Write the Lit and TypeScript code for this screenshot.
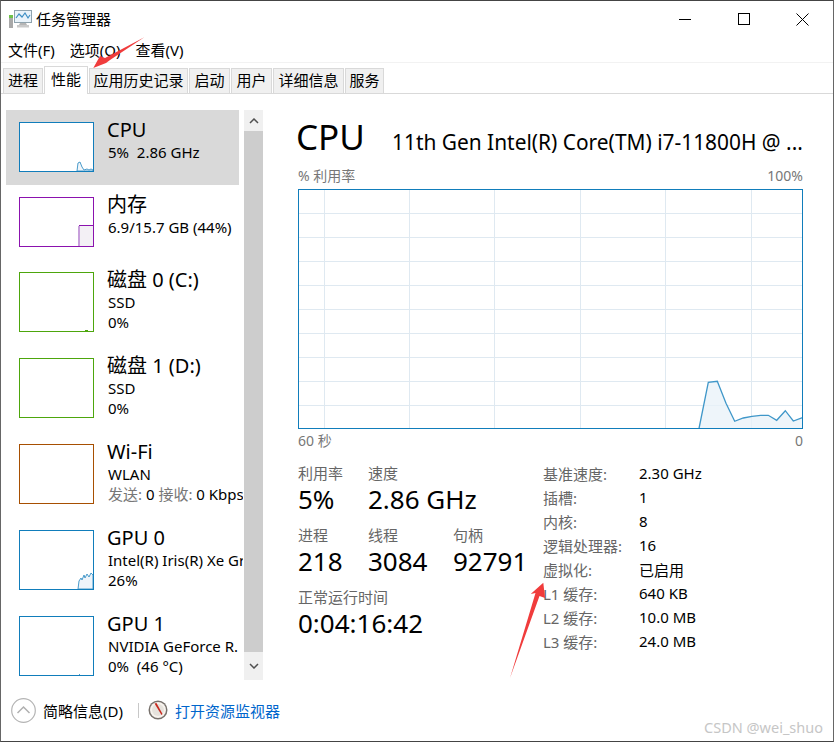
import { LitElement, html, css, svg } from "lit";
import { customElement } from "lit/decorators.js";

type Item = {
  name: string;
  lines: string[];
  color: string;
  tall: boolean;
  selected?: boolean;
  mark?: ReturnType<typeof svg>;
};

const BLUE = "#117dbb";

const items: Item[] = [
  {
    name: "CPU",
    lines: ["5%  2.86 GHz"],
    color: BLUE,
    tall: false,
    selected: true,
    mark: svg`<path d="M58 49 L59 41 L61 40 L63 45 L65 48 L68 47 L70 48 L72 47 L74 48 V49 Z" fill="#f1f6fa" stroke="#4a9bcb" stroke-width="1"/>`,
  },
  {
    name: "内存",
    lines: ["6.9/15.7 GB (44%)"],
    color: "#8b12ae",
    tall: false,
    mark: svg`<rect x="60" y="28" width="14" height="21" fill="#f3f0f5"/>
      <rect x="59" y="29" width="2" height="20" fill="#c79fdb"/>
      <rect x="60" y="28" width="14" height="1" fill="#8b12ae"/>`,
  },
  {
    name: "磁盘 0 (C:)",
    lines: ["SSD", "0%"],
    color: "#4da60c",
    tall: true,
    mark: svg`<rect x="66" y="58" width="3" height="1" fill="#4da60c"/>`,
  },
  { name: "磁盘 1 (D:)", lines: ["SSD", "0%"], color: "#4da60c", tall: true },
  { name: "Wi-Fi", lines: ["WLAN", "发送: 0 接收: 0 Kbps"], color: "#a74f01", tall: true },
  {
    name: "GPU 0",
    lines: ["Intel(R) Iris(R) Xe Graphics", "26%"],
    color: BLUE,
    tall: true,
    mark: svg`<path d="M59 59 L60 51 L62 48 L63 50 L65 45 L66 48 L68 44 L70 47 L72 43 L74 45 V59 Z" fill="#eef4fa" stroke="#4a9bcb" stroke-width="1"/>`,
  },
  {
    name: "GPU 1",
    lines: ["NVIDIA GeForce R.", "0%  (46 °C)"],
    color: BLUE,
    tall: true,
    mark: svg`<rect x="60" y="58" width="1" height="1" fill="#4a9bcb"/>`,
  },
];

const details = [
  ["基准速度:", "2.30 GHz"],
  ["插槽:", "1"],
  ["内核:", "8"],
  ["逻辑处理器:", "16"],
  ["虚拟化:", "已启用"],
  ["L1 缓存:", "640 KB"],
  ["L2 缓存:", "10.0 MB"],
  ["L3 缓存:", "24.0 MB"],
];

const tabs: [string, number][] = [
  ["进程", 40],
  ["性能", 44],
  ["应用历史记录", 99],
  ["启动", 41],
  ["用户", 41],
  ["详细信息", 71],
  ["服务", 39],
];

// graph points, relative to the top left of the plot
const curve =
  "401,239.500 410.300,193.300 419.300,192.300 428,214.300 436.700,232.300 445.300,229 454,227.300 462.700,226.300 470.300,226.300 478.700,231.300 487.300,221.700 495.300,232 504.500,228.700";

@customElement("app-root")
export class AppRoot extends LitElement {
  static styles = css`
    :host {
      display: flex;
      flex-direction: column;
      position: relative;
      box-sizing: border-box;
      width: 834px;
      height: 742px;
      border: 1px solid #444;
      border-left-color: #666;
      border-right-color: #666;
      background: #fff;
      overflow: hidden;
      color: #000;
      font-family: "Noto Sans", "Noto Sans CJK SC", sans-serif;
      font-size: 15px;
    }
    .titlebar {
      display: flex;
      align-items: center;
      height: 38px;
      flex: none;
    }
    .appicon {
      margin-left: 8px;
      width: 24px;
      height: 20px;
      margin-top: -3px;
    }
    .title {
      margin-left: 3px;
      margin-top: -3px;
      font-size: 15px;
      flex: 1;
    }
    .winbtn {
      width: 58.500px;
      height: 38px;
      padding-bottom: 2px;
      box-sizing: border-box;
      display: flex;
      align-items: center;
      justify-content: center;
    }
    .winbtn:last-child {
      margin-right: 1px;
    }
    .menu {
      display: flex;
      gap: 15px;
      height: 23px;
      align-items: center;
      padding-left: 7px;
      flex: none;
      line-height: 1;
    }
    .tabs {
      display: flex;
      align-items: flex-end;
      height: 32px;
      padding-left: 2px;
      gap: 1px;
      border-top: 1px solid #f2f2f2;
      border-bottom: 1px solid #d9d9d9;
      box-sizing: border-box;
      flex: none;
    }
    .tab {
      box-sizing: border-box;
      height: 25px;
      padding-bottom: 2px;
      display: flex;
      align-items: center;
      justify-content: center;
      background: #f0f0f0;
      border: 1px solid #d9d9d9;
      border-bottom: none;
      line-height: 1;
      white-space: nowrap;
    }
    .tab.active {
      height: 28px;
      background: #fff;
      margin-bottom: -1px;
      padding-bottom: 3px;
    }
    .body {
      display: flex;
      flex: 1;
      min-height: 0;
    }
    .side {
      display: flex;
      width: 262px;
      padding: 16px 0 0 5px;
      box-sizing: border-box;
      flex: none;
    }
    .list {
      width: 237px;
      height: 570px;
      overflow: hidden;
      flex: none;
    }
    .item {
      box-sizing: border-box;
      width: 233px;
      height: 75px;
      padding: 12px 0 0 13px;
      display: flex;
      gap: 14px;
      white-space: nowrap;
    }
    .item.tall {
      height: 86px;
    }
    .item.selected {
      background: #d9d9d9;
    }
    .thumb {
      width: 75px;
      height: 50px;
      flex: none;
      display: block;
    }
    .tall .thumb {
      height: 60px;
    }
    .text {
      margin-top: -3px;
    }
    .name {
      font-size: 20px;
      line-height: 22px;
      height: 23px;
      margin-left: -1px;
    }
    .line {
      font-size: 15px;
      line-height: 20px;
      white-space: pre;
    }
    .muted {
      color: #777;
    }
    .scroll {
      margin-left: 1px;
      width: 19px;
      height: 570px;
      display: flex;
      flex-direction: column;
      background: #f0f0f0;
      flex: none;
    }
    .scroll .btn {
      height: 21px;
      display: flex;
      align-items: center;
      justify-content: center;
      flex: none;
    }
    .scroll .btn.down {
      height: 28px;
    }
    .scroll .bar {
      flex: 1;
      background: #cdcdcd;
    }
    .main {
      flex: 1;
      padding: 18px 30px 0 35px;
      min-width: 0;
    }
    .head {
      display: flex;
      align-items: baseline;
      height: 51px;
      white-space: nowrap;
    }
    .head .big {
      font-size: 35px;
      line-height: 49px;
      width: 96px;
      margin-left: -2px;
    }
    .head .cpu {
      font-size: 20.900px;
    }
    .axis {
      display: flex;
      justify-content: space-between;
      color: #777;
      font-size: 14px;
      line-height: 18px;
    }
    .axis.top {
      margin-top: 4px;
      height: 22px;
    }
    .axis.bottom {
      height: 30px;
      margin-top: 3px;
    }
    .plot {
      display: block;
      width: 505px;
      height: 240px;
    }
    .stats {
      display: flex;
    }
    .left {
      width: 245px;
      flex: none;
      margin-top: 1px;
    }
    .row {
      display: flex;
      height: 62px;
    }
    .stat .k {
      font-size: 15px;
      line-height: 20px;
      color: #666;
    }
    .stat .v {
      font-size: 26px;
      line-height: 32px;
    }
    .s1 {
      width: 70px;
    }
    .s2 {
      width: 85px;
    }
    .right {
      display: grid;
      grid-template-columns: 96px auto;
      grid-auto-rows: 24px;
      align-items: center;
      align-self: flex-start;
      margin-top: -1px;
      font-size: 15px;
    }
    .right .k {
      color: #666;
    }
    .footer {
      height: 60px;
      flex: none;
      display: flex;
      align-items: center;
      padding: 0 0 2px 10px;
      box-sizing: border-box;
      font-size: 15px;
    }
    .footer .less {
      margin-left: 7px;
    }
    .footer .sep {
      width: 1px;
      height: 15px;
      background: #c8c8c8;
      margin: 0 9px 0 15px;
    }
    .footer .gauge {
      margin-right: 7px;
    }
    .footer .link {
      color: #0066cc;
    }
    .arrow {
      position: absolute;
      left: -1px;
      top: -1px;
      pointer-events: none;
    }
    .mark {
      position: absolute;
      right: 10px;
      bottom: 5px;
      color: #c6c6c6;
      font-size: 14.500px;
      line-height: 18px;
      pointer-events: none;
    }
  `;

  renderItem(it: Item) {
    const h = it.tall ? 60 : 50;
    return html`
      <div class="item ${it.selected ? "selected" : ""} ${it.tall ? "tall" : ""}">
        <svg class="thumb" viewBox="0 0 75 ${h}">
          <rect width="75" height=${h} fill="#fff" />
          ${it.mark}
          <rect x=".5" y=".5" width="74" height=${h - 1} fill="none" stroke=${it.color} />
        </svg>
        <div class="text">
          <div class="name">${it.name}</div>
          ${it.lines.map((l) => {
            if (l.startsWith("发送")) {
              return html`<div class="line"><span class="muted">发送:</span> 0 <span class="muted">接收:</span> 0 Kbps</div>`;
            }
            return html`<div class="line">${l}</div>`;
          })}
        </div>
      </div>
    `;
  }

  renderPlot() {
    const vs = [26, 111, 196, 282, 367, 453];
    const hs = [24, 48, 72, 96, 120, 144, 168, 192, 216];
    return html`
      <svg class="plot" viewBox="0 0 505 240">
        ${vs.map((x) => svg`<line x1=${x + 0.5} x2=${x + 0.5} y1="0" y2="240" stroke="#dfe9f1"/>`)}
        ${hs.map((y) => svg`<line x1="0" x2="505" y1=${y + 0.5} y2=${y + 0.5} stroke="#dfe9f1"/>`)}
        <polygon points="${curve} 504.500,239.500" fill="#e8f1f8" fill-opacity=".75" />
        <polyline points=${curve} fill="none" stroke="#3f97c9" stroke-width="1.300" />
        <rect x=".5" y=".5" width="504" height="239" fill="none" stroke=${BLUE} />
      </svg>
    `;
  }

  render() {
    return html`
      <div class="titlebar">
        <svg class="appicon" viewBox="0 0 24 20">
          <rect x="5.500" y="1.500" width="17" height="12" fill="#eaf3fa" stroke="#8fa3ae" />
          <path d="M7 9 L10 5 L13 8 L16 4 L19 9 L21 6" fill="none" stroke="#3f8fc4" stroke-width="1.200" />
          <rect x="0" y="6" width="4" height="13" fill="#a9a9a9" />
          <rect x="0" y="6" width="4" height="3" fill="#6fc24a" />
          <path d="M11 14 H17 L18 16 H10 Z" fill="#b5b5b5" />
          <rect x="8" y="16" width="12" height="2.500" fill="#c9c9c9" />
        </svg>
        <div class="title">任务管理器</div>
        <div class="winbtn">
          <svg width="13" height="13"><line x1="0" x2="12" y1="6.500" y2="6.500" stroke="#000" /></svg>
        </div>
        <div class="winbtn">
          <svg width="13" height="13"><rect x=".5" y=".5" width="11" height="11" fill="none" stroke="#000" /></svg>
        </div>
        <div class="winbtn">
          <svg width="13" height="13"><path d="M.5 .5 L12.500 12.500 M12.500 .5 L.5 12.500" stroke="#000" /></svg>
        </div>
      </div>
      <div class="menu"><span>文件(F)</span><span>选项(O)</span><span>查看(V)</span></div>
      <div class="tabs">
        ${tabs.map(
          ([t, w]) => html`<div class="tab ${t === "性能" ? "active" : ""}" style="width:${w}px">${t}</div>`
        )}
      </div>
      <div class="body">
        <div class="side">
          <div class="list">${items.map((it) => this.renderItem(it))}</div>
          <div class="scroll">
            <div class="btn">
              <svg width="10" height="6"><path d="M1 5 L5 1 L9 5" fill="none" stroke="#505050" stroke-width="1.500" /></svg>
            </div>
            <div class="bar"></div>
            <div class="btn down">
              <svg width="10" height="6"><path d="M1 1 L5 5 L9 1" fill="none" stroke="#505050" stroke-width="1.500" /></svg>
            </div>
          </div>
        </div>
        <div class="main">
          <div class="head">
            <div class="big">CPU</div>
            <div class="cpu">11th Gen Intel(R) Core(TM) i7-11800H @ ...</div>
          </div>
          <div class="axis top"><span>% 利用率</span><span>100%</span></div>
          ${this.renderPlot()}
          <div class="axis bottom"><span>60 秒</span><span>0</span></div>
          <div class="stats">
            <div class="left">
              <div class="row">
                <div class="stat s1"><div class="k">利用率</div><div class="v">5%</div></div>
                <div class="stat"><div class="k">速度</div><div class="v">2.86 GHz</div></div>
              </div>
              <div class="row">
                <div class="stat s1"><div class="k">进程</div><div class="v">218</div></div>
                <div class="stat s2"><div class="k">线程</div><div class="v">3084</div></div>
                <div class="stat"><div class="k">句柄</div><div class="v">92791</div></div>
              </div>
              <div class="row">
                <div class="stat"><div class="k">正常运行时间</div><div class="v">0:04:16:42</div></div>
              </div>
            </div>
            <div class="right">
              ${details.map(([k, v]) => html`<div class="k">${k}</div><div>${v}</div>`)}
            </div>
          </div>
        </div>
      </div>
      <div class="footer">
        <svg width="25" height="25" viewBox="0 0 25 25">
          <circle cx="12.500" cy="12.500" r="11.800" fill="#fff" stroke="#b4b4b4" stroke-width="1.200" />
          <path d="M6.500 15 L12.500 9 L18.500 15" fill="none" stroke="#b0b0b0" stroke-width="1.500" />
        </svg>
        <span class="less">简略信息(D)</span>
        <div class="sep"></div>
        <svg class="gauge" width="20" height="20" viewBox="0 0 20 20">
          <circle cx="10" cy="10" r="9.500" fill="#77716c" />
          <circle cx="10" cy="10" r="8" fill="#f7f3ee" />
          <circle cx="10" cy="10" r="6" fill="#e6e2dc" />
          <path d="M6.500 3.500 L8.500 3 L14.500 14 L13.500 15 Z" fill="#c8281e" />
        </svg>
        <span class="link">打开资源监视器</span>
      </div>
      <svg class="arrow" width="834" height="742">
        <polygon points="93.300,68 100,56 105,58 144.300,37.300 110,60 106,63" fill="#f03c3c" />
        <polygon points="543.300,582.700 545,598 539.500,596 510,678 535.500,593 530.700,594" fill="#f03c3c" />
      </svg>
      <div class="mark">CSDN @wei_shuo</div>
    `;
  }
}
